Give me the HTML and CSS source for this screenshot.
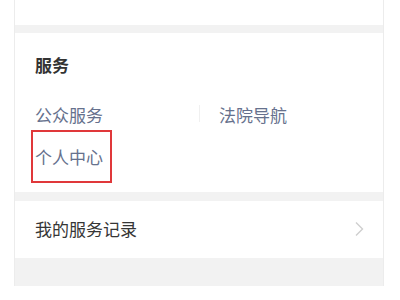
FILE: index.html
```html
<!DOCTYPE html>
<html lang="zh">
<head>
<meta charset="utf-8">
<link rel="stylesheet" href="styles.css">
</head>
<body>
<div class="page">
  <div class="top-card"></div>
  <div class="gap gap-a"></div>
  <div class="service-card">
    <div class="title">服务</div>
    <div class="grid">
      <div class="item">公众服务</div>
      <div class="item">法院导航</div>
      <div class="item marked">个人中心<span class="mark"></span></div>
    </div>
  </div>
  <div class="gap gap-b"></div>
  <div class="row">
    <span>我的服务记录</span>
    <svg class="chev" width="10" height="16" viewBox="0 0 10 16"><path d="M2 1.5 L8.5 8 L2 14.5" fill="none" stroke="#cfcfcf" stroke-width="1.4"/></svg>
  </div>
  <div class="gap gap-c"></div>
</div>
</body>
</html>
```
FILE: styles.css
```css
html, body { margin: 0; padding: 0; background: #fff; }
body { font-family: "Noto Sans CJK SC", "Noto Sans", sans-serif; width: 400px; height: 300px; overflow: hidden; }
.page {
  margin: 0 16px 0 14px;
  border-left: 1px solid #ececec;
  border-right: 1px solid #ececec;
  background: #fff;
}
.top-card { height: 25px; background: #fff; }
.gap { background: #f2f2f2; }
.gap-a { height: 8px; }
.gap-b { height: 9px; }
.gap-c { height: 28px; }
.service-card { height: 159px; box-sizing: border-box; padding-top: 20px; background: #fff; }
.title {
  padding-left: 20px;
  font-size: 17px; line-height: 24px; font-weight: 700; color: #333;
}
.grid {
  margin-top: 17px;
  display: grid;
  grid-template-columns: 184px 1fr;
}
.item {
  position: relative;
  padding-left: 20px;
  font-size: 17px; line-height: 42px; height: 42px; color: #66718d;
}
.item:nth-child(2)::before {
  content: "";
  position: absolute; left: 0; top: 11px;
  width: 1px; height: 17px; background: #f0f0f0;
}
.mark {
  position: absolute; left: 16px; top: -6px;
  width: 77px; height: 49px;
  border: 2px solid #e0383a;
}
.row {
  height: 57px;
  display: flex; align-items: center; justify-content: space-between;
  padding: 0 19px 0 20px;
  font-size: 17px; color: #363636;
}
.row span { margin-top: -3px; }
.chev { display: block; margin-top: -2px; }
```
